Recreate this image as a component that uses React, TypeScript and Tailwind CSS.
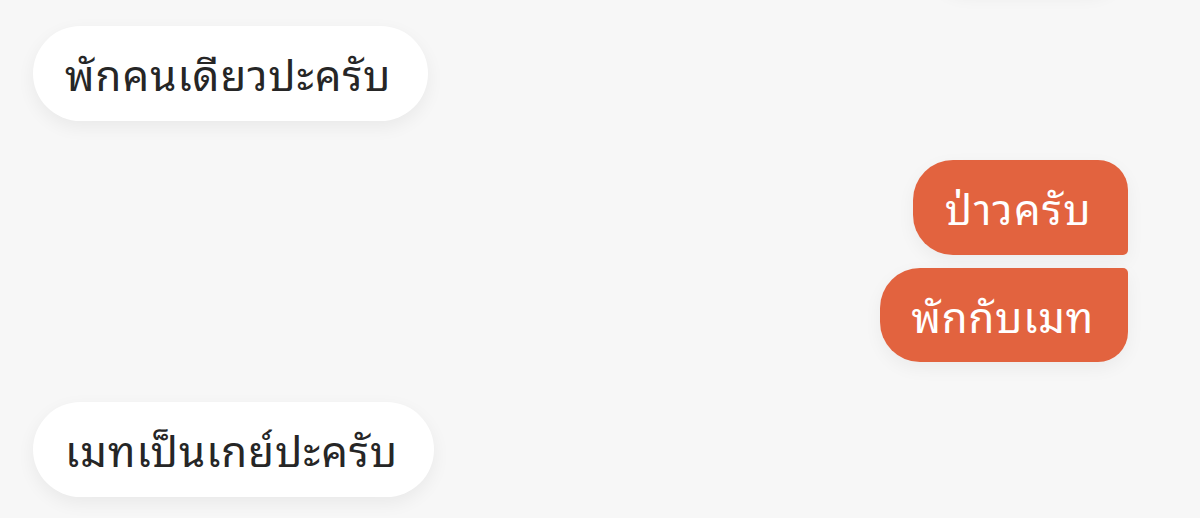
const font = {
  fontFamily: '"Noto Sans Thai Looped", "Noto Sans Thai", "Noto Sans", "Liberation Sans", sans-serif',
};

function Left({ text }: { text: string }) {
  return (
    <div className="flex justify-start">
      <div className="h-[95px] pl-8 pr-9 pb-[2px] flex items-center rounded-full bg-white text-[#262626] text-[42px] tracking-[0.025em] shadow-[0_6px_18px_rgba(0,0,0,0.06)]">
        {text}
      </div>
    </div>
  );
}

export default function App() {
  return (
    <div
      className="w-[1200px] h-[518px] overflow-hidden bg-[#f7f7f7] relative"
      style={font}
    >
      {/* bubble cut off above the top edge */}
      <div className="absolute right-[72px] -top-[90px] w-[200px] h-[80px] rounded-[40px] bg-[#f7f7f7] shadow-[0_6px_18px_rgba(0,0,0,0.06)]" />

      <div className="flex flex-col pl-[33px] pr-[72px] pt-[26px]">
        <Left text="พักคนเดียวปะครับ" />

        <div className="mt-[39px] flex flex-col items-end gap-[13px]">
          <div className="h-[95px] pl-8 pr-[36px] pb-[2px] flex items-center bg-[#e2633f] text-white text-[42px] tracking-[0.035em] rounded-[40px_30px_5px_40px] shadow-[0_6px_18px_rgba(0,0,0,0.05)]">
            ป่าวครับ
          </div>
          <div className="h-[94px] pl-8 pr-[34px] pb-[2px] flex items-center bg-[#e2633f] text-white text-[42px] tracking-[0.02em] rounded-[40px_5px_30px_40px] shadow-[0_6px_18px_rgba(0,0,0,0.05)]">
            พักกับเมท
          </div>
        </div>

        <div className="mt-[40px]">
          <Left text="เมทเป็นเกย์ปะครับ" />
        </div>
      </div>
    </div>
  );
}
